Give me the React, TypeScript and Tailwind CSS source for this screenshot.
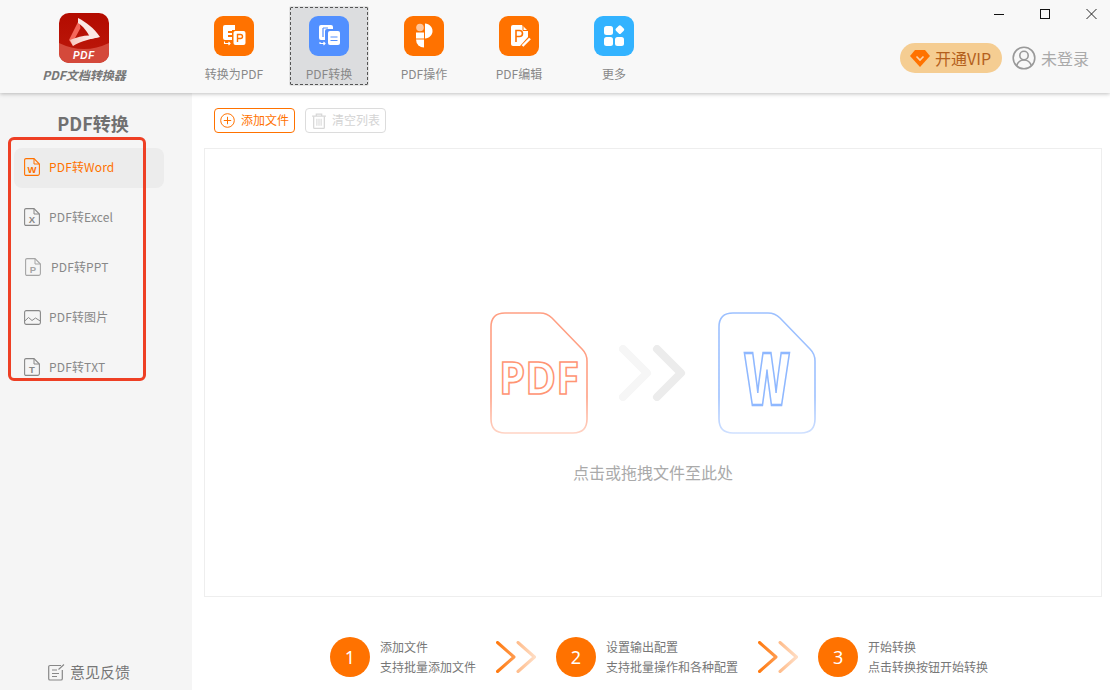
import React from "react";

const font = { fontFamily: '"Noto Sans CJK SC", "Noto Sans", sans-serif' };

function LogoIcon() {
  return (
    <svg width="50" height="50" viewBox="0 0 50 50">
      <defs>
        <linearGradient id="lg" x1="0" y1="0" x2="0" y2="1">
          <stop offset="0" stopColor="#b30b00" />
          <stop offset="1" stopColor="#bd1a0c" />
        </linearGradient>
        <linearGradient id="lgb" x1="0" y1="0" x2="1" y2="0">
          <stop offset="0" stopColor="#f6c6bc" />
          <stop offset="1" stopColor="#ffffff" />
        </linearGradient>
      </defs>
      <rect width="50" height="50" rx="10" fill="url(#lg)" />
      <path d="M0 30 Q25 42 50 30 V40 A10 10 0 0 1 40 50 H10 A10 10 0 0 1 0 40 Z" fill="#d4493b" />
      <path d="M20 7 L21.5 15 L15 27 L14 33 L10 27 Z" fill="#f4675a" />
      <path d="M11 27 L14 33 C22 28 31 26 40 24 L32 22.5 C26 22 18 24 11 27 Z" fill="url(#lgb)" />
      <path d="M19 5 C27 9 35 15 41 24 L32 26 C28 18 24 13 19 10 Z" fill="#fbe9e4" />
      <text x="25" y="46" textAnchor="middle" fontSize="10" fontWeight="700" fontStyle="italic" letterSpacing="0.6" fill="#fff" style={{ fontFamily: '"Liberation Sans", sans-serif' }}>PDF</text>
    </svg>
  );
}

function ConvertToIcon() {
  return (
    <svg width="40" height="40" viewBox="0 0 40 40">
      <rect width="40" height="40" rx="9" fill="#ff7200" />
      <path d="M11 9 H21 V14 H18 V15 H14 V17 H18 V19 H14 V21 H18 V24 H11 A2 2 0 0 1 9 22 V11 A2 2 0 0 1 11 9 Z" fill="#fff" />
      <rect x="19.5" y="15" width="12" height="14" rx="2" fill="#fff" />
      <path d="M23.5 26 V18.5 H26.5 A2 2 0 0 1 26.5 22.5 H23.5" fill="none" stroke="#ff7200" strokeWidth="1.4" />
      <path d="M10.5 25.5 V27.5 H16 M14.5 26 L16 27.5 L14.5 29" fill="none" stroke="#fff" strokeWidth="1.1" />
    </svg>
  );
}

function ConvertIcon() {
  return (
    <svg width="40" height="40" viewBox="0 0 40 40">
      <rect width="40" height="40" rx="9" fill="#5290ff" />
      <path d="M12 9 H22 A2 2 0 0 1 24 11 V13 H18 A2 2 0 0 0 16 15 V24 H12 A2 2 0 0 1 10 22 V11 A2 2 0 0 1 12 9 Z" fill="#fff" />
      <path d="M14 12 H19 M14 12 V21" fill="none" stroke="#5290ff" strokeWidth="1.2" />
      <rect x="19" y="15" width="12" height="14" rx="2" fill="#fff" />
      <path d="M21.5 21 H28.5 M21.5 24.5 H28.5" stroke="#5290ff" strokeWidth="1.2" />
      <path d="M11 26 V27.5 H16 M14.5 26 L16 27.5 L14.5 29" fill="none" stroke="#fff" strokeWidth="1.1" />
    </svg>
  );
}

function OperateIcon() {
  return (
    <svg width="40" height="40" viewBox="0 0 40 40">
      <rect width="40" height="40" rx="9" fill="#ff7200" />
      <circle cx="16" cy="11.5" r="3.8" fill="#ffc59a" />
      <path d="M21 7.5 C25.5 8 28.5 11 28.5 15 C28.5 19 25.5 22 21 22.5 Z" fill="#fff" />
      <rect x="12" y="16.5" width="8" height="6" fill="#fff" />
      <path d="M12 23.5 H20 V31.5 A8 8 0 0 1 12 23.5 Z" fill="#fff" />
    </svg>
  );
}

function EditIcon() {
  return (
    <svg width="40" height="40" viewBox="0 0 40 40">
      <rect width="40" height="40" rx="9" fill="#ff7200" />
      <path d="M14 9 H23 L29 15 V21 L21 30 H14 A2 2 0 0 1 12 28 V11 A2 2 0 0 1 14 9 Z" fill="#fff" />
      <path d="M17 26 V14.5 H20.5 A3 3 0 0 1 20.5 20.5 H17" fill="none" stroke="#ff7200" strokeWidth="1.6" />
      <path d="M23.5 30 L31 22.5" stroke="#fff" strokeWidth="2.4" />
      <path d="M24 9 V14.5 H29" fill="none" stroke="#ff7200" strokeWidth="1" />
    </svg>
  );
}

function MoreIcon() {
  return (
    <svg width="40" height="40" viewBox="0 0 40 40">
      <rect width="40" height="40" rx="9" fill="#33b3ff" />
      <rect x="10" y="10" width="9" height="9" rx="2.5" fill="#fff" />
      <rect x="10" y="21" width="9" height="9" rx="2.5" fill="#fff" />
      <rect x="21" y="21" width="9" height="9" rx="2.5" fill="#fff" />
      <rect x="22" y="10" width="7" height="7" rx="1.5" fill="#fff" transform="rotate(45 25.5 14)" />
    </svg>
  );
}

function FileIcon({ color, letter }: { color: string; letter: string }) {
  return (
    <svg width="16" height="18" viewBox="0 0 16 18" className="shrink-0">
      <path d="M2 .6 H10 L15.4 6 V15.5 A1.8 1.8 0 0 1 13.6 17.4 H2 A1.4 1.4 0 0 1 .6 16 V2 A1.4 1.4 0 0 1 2 .6 Z" fill="none" stroke={color} strokeWidth="1.1" />
      <path d="M10 .8 V6 H15.2" fill="none" stroke={color} strokeWidth="1" />
      <text x="8" y="15" textAnchor="middle" fontSize="9.5" fontWeight="700" fill={color} style={{ fontFamily: '"Liberation Sans", sans-serif' }}>{letter}</text>
    </svg>
  );
}

function ImageIcon() {
  return (
    <svg width="17" height="15" viewBox="0 0 17 15" className="-mr-[1px] shrink-0">
      <rect x=".6" y=".6" width="15.8" height="13.8" rx="1.6" fill="none" stroke="#888" strokeWidth="1.1" />
      <path d="M.8 11 L4.5 7.5 L8 10.5 L11.5 8 L16.2 11" fill="none" stroke="#888" strokeWidth="1" />
    </svg>
  );
}

function BigDoc({ stroke, fade, id, children }: { stroke: string; fade: string; id: string; children: React.ReactNode }) {
  return (
    <svg width="98" height="122" viewBox="0 0 98 122" className="shrink-0">
      <defs>
        <linearGradient id={id} x1="0" y1="0" x2="0" y2="1">
          <stop offset="0" stopColor={stroke} />
          <stop offset="0.7" stopColor={stroke} />
          <stop offset="1" stopColor={fade} />
        </linearGradient>
      </defs>
      <path d="M15 1 H50 Q57 1 62 6 L92 37 Q97 42 97 49 V107 Q97 121 83 121 H15 Q1 121 1 107 V15 Q1 1 15 1 Z" fill="#fff" stroke={`url(#${id})`} strokeWidth="1.6" />
      {children}
    </svg>
  );
}

function Chevrons() {
  return (
    <svg width="68" height="56" viewBox="0 0 68 56" className="shrink-0">
      <path d="M4 4 L28 28 L4 52" fill="none" stroke="#f6f6f6" strokeWidth="8" strokeLinecap="round" strokeLinejoin="round" />
      <path d="M38 4 L62 28 L38 52" fill="none" stroke="#ececec" strokeWidth="8" strokeLinecap="round" strokeLinejoin="round" />
    </svg>
  );
}

function StepArrows() {
  return (
    <svg width="40" height="32" viewBox="0 0 40 32" className="shrink-0">
      <defs>
        <linearGradient id="sa1" x1="0" y1="0" x2="1" y2="0">
          <stop offset="0" stopColor="#ff7a10" />
          <stop offset="1" stopColor="#ff9a4d" />
        </linearGradient>
        <linearGradient id="sa2" x1="0" y1="0" x2="1" y2="0">
          <stop offset="0" stopColor="#ffbd8c" />
          <stop offset="1" stopColor="#ffdcc2" />
        </linearGradient>
      </defs>
      <path d="M1.5 1.5 L18 16 L1.5 30.5" fill="none" stroke="url(#sa1)" strokeWidth="3" strokeLinecap="round" strokeLinejoin="round" />
      <path d="M22 1.5 L38.5 16 L22 30.5" fill="none" stroke="url(#sa2)" strokeWidth="3" strokeLinecap="round" strokeLinejoin="round" />
    </svg>
  );
}

function Step({ n, title, desc }: { n: string; title: string; desc: string }) {
  return (
    <div className="flex items-center gap-[10px]">
      <div className="flex h-10 w-10 items-center justify-center rounded-full bg-[#ff7200] text-[18px] text-white" style={{ fontFamily: '"Noto Sans", sans-serif' }}>{n}</div>
      <div className="mb-[2px] flex flex-col gap-[3px] text-[12px] leading-[17px] text-[#777]">
        <span>{title}</span>
        <span>{desc}</span>
      </div>
    </div>
  );
}

const navItems = [
  { label: "转换为PDF", icon: <ConvertToIcon /> },
  { label: "PDF转换", icon: <ConvertIcon />, active: true },
  { label: "PDF操作", icon: <OperateIcon /> },
  { label: "PDF编辑", icon: <EditIcon /> },
  { label: "更多", icon: <MoreIcon /> },
];

const sideItems = [
  { label: "PDF转Word", icon: <FileIcon color="#ff7200" letter="W" />, active: true },
  { label: "PDF转Excel", icon: <FileIcon color="#888" letter="X" /> },
  { label: "PDF转PPT", icon: <span className="ml-[1px] mr-[1px] flex"><FileIcon color="#a5a5a5" letter="P" /></span> },
  { label: "PDF转图片", icon: <ImageIcon /> },
  { label: "PDF转TXT", icon: <FileIcon color="#888" letter="T" /> },
];

export default function App() {
  return (
    <div className="flex h-[690px] w-[1110px] flex-col overflow-hidden bg-white" style={font}>
      <header className="relative z-10 flex h-[93px] shrink-0 bg-[#f8f8f8] shadow-[0_1px_4px_rgba(0,0,0,0.25)]">
        <div className="flex w-[168px] shrink-0 flex-col items-center pt-[13px]">
          <LogoIcon />
          <span className="mt-[3px] text-[12px] font-bold italic leading-[18px] text-[#777]">PDF文档转换器</span>
        </div>
        <nav className="ml-[27px] flex gap-[17px] pt-[7px]">
          {navItems.map((it) => (
            <div
              key={it.label}
              className={`flex h-[78px] w-[78px] flex-col items-center ${it.active ? "rounded-[1px] border border-dashed border-[#555] bg-[#dcdddf] pt-[8px] outline outline-1 outline-[#e4e4e4]" : "pt-[9px]"}`}
            >
              {it.icon}
              <span className="mt-[9px] text-[12px] leading-[18px] text-[#888]">{it.label}</span>
            </div>
          ))}
        </nav>
        <div className="ml-auto flex w-[210px] flex-col">
          <div className="flex h-[28px] items-start justify-end gap-[36px] pr-[13px] pt-[9px]">
            <svg width="10" height="10" viewBox="0 0 10 10"><path d="M0 5.5 H10" stroke="#111" strokeWidth="1" /></svg>
            <svg width="10" height="10" viewBox="0 0 10 10"><rect x=".5" y=".5" width="9" height="9" fill="none" stroke="#111" strokeWidth="1" /></svg>
            <svg width="11" height="10" viewBox="0 0 11 10"><path d="M.5 0 L10.5 10 M10.5 0 L.5 10" stroke="#111" strokeWidth="0.9" /></svg>
          </div>
          <div className="mt-[15px] flex items-center">
            <div className="flex h-[30px] w-[102px] items-center rounded-full bg-[#f5cd92] pl-[10px]">
              <svg width="20" height="18" viewBox="0 0 20 18" className="shrink-0">
                <path d="M5 1 H15 L20 7 L10 18 L0 7 Z" fill="#ff7200" />
                <path d="M6.5 7.5 L10 11 L13.5 7.5" fill="none" stroke="#fbd3a8" strokeWidth="1.6" />
              </svg>
              <span className="ml-[5px] text-[16px] leading-[24px] text-[#b4601c]">开通VIP</span>
            </div>
            <svg width="24" height="24" viewBox="0 0 24 24" className="ml-[10px] shrink-0">
              <circle cx="12" cy="12" r="10.8" fill="none" stroke="#999" strokeWidth="1.6" />
              <circle cx="12" cy="9.5" r="4.2" fill="none" stroke="#999" strokeWidth="1.6" />
              <path d="M4.5 20 C6 15.5 9 14 12 14 C15 14 18 15.5 19.5 20" fill="none" stroke="#999" strokeWidth="1.6" />
            </svg>
            <span className="ml-[5px] text-[16px] leading-[24px] text-[#aaa]">未登录</span>
          </div>
        </div>
      </header>

      <div className="flex min-h-0 flex-1">
        <aside className="relative flex w-[192px] shrink-0 flex-col bg-[#f5f5f5]">
          <h2 className="mt-[17px] w-[186px] text-center text-[18px] font-bold leading-[26px] text-[#707070]">PDF转换</h2>
          <ul className="ml-[14px] mt-[12px] flex w-[150px] flex-col gap-[10px]">
            {sideItems.map((it) => (
              <li
                key={it.label}
                className={`flex h-10 items-center gap-[9px] rounded-lg pb-[2px] pl-[10px] text-[12px] tracking-[0.15px] ${it.active ? "bg-[#ececec] text-[#ff7200]" : "text-[#888]"}`}
              >
                {it.icon}
                <span>{it.label}</span>
              </li>
            ))}
          </ul>
          <div className="absolute left-[8px] top-[44px] h-[244px] w-[138px] rounded-[6px] border-[3px] border-[#ee3f24]" />
          <div className="mt-auto flex items-center justify-center gap-[5px] pb-[8px] pr-[14px]">
            <svg width="17" height="17" viewBox="0 0 17 17">
              <path d="M13 1.5 H2 A1.3 1.3 0 0 0 .7 2.8 V14.7 A1.3 1.3 0 0 0 2 16 H13 A1.3 1.3 0 0 0 14.3 14.7 V6" fill="none" stroke="#888" strokeWidth="1.2" />
              <path d="M4 6 H9 M4 9.5 H11 M4 12.5 H9 M10.5 5.5 L16 .5" stroke="#888" strokeWidth="1.1" fill="none" />
            </svg>
            <span className="text-[15px] leading-[20px] text-[#777]">意见反馈</span>
          </div>
        </aside>

        <main className="flex min-w-0 flex-1 flex-col">
          <div className="ml-[22px] mt-[15px] flex gap-[10px]">
            <div className="flex h-[25px] w-[81px] items-center gap-[6px] rounded-[4px] border border-[#ff7200] pl-[5px] text-[12px] text-[#ff7200]">
              <svg width="15" height="15" viewBox="0 0 15 15"><circle cx="7.5" cy="7.5" r="6.8" fill="none" stroke="#ff7200" strokeWidth="1" /><path d="M3.8 7.5 H11.2 M7.5 3.8 V11.2" stroke="#ff7200" strokeWidth="1" /></svg>
              <span className="mb-[2px]">添加文件</span>
            </div>
            <div className="flex h-[25px] w-[81px] items-center gap-[6px] rounded-[4px] border border-[#dcdcdc] pl-[6px] text-[12px] text-[#d4d4d4]">
              <svg width="14" height="16" viewBox="0 0 13 15"><path d="M0 3 H13 M4 3 V1 H9 V3" fill="none" stroke="#d8d8d8" strokeWidth="1.2" /><path d="M1.5 3 V13.5 A1 1 0 0 0 2.5 14.5 H10.5 A1 1 0 0 0 11.5 13.5 V3" fill="none" stroke="#d8d8d8" strokeWidth="1.2" /><path d="M4.5 5.5 V12 M6.5 5.5 V12 M8.5 5.5 V12" stroke="#d8d8d8" strokeWidth="1" /></svg>
              <span className="mb-[2px]">清空列表</span>
            </div>
          </div>

          <section className="ml-[12px] mr-[8px] mt-[15px] flex h-[449px] shrink-0 flex-col items-center border border-[#eeeeee] pt-[163px]">
            <div className="flex items-center gap-[31px]">
              <BigDoc stroke="#ff9f83" fade="#ffd3c4" id="dpdf">
                <g transform="translate(49 82) scale(0.93 1)">
                  <text x="0" y="0" textAnchor="middle" fontSize="45" fontWeight="700" fill="#fff" stroke="#ff9573" strokeWidth="1.6" style={{ fontFamily: '"Open Sans", sans-serif' }}>PDF</text>
                </g>
              </BigDoc>
              <Chevrons />
              <BigDoc stroke="#9cc0ff" fade="#cfe0ff" id="dw">
                <g transform="translate(49 93) scale(0.62 1)">
                  <text x="0" y="0" textAnchor="middle" fontSize="72" fontWeight="800" fill="#fff" stroke="#8fb8ff" strokeWidth="2.4" style={{ fontFamily: '"Open Sans", sans-serif' }}>W</text>
                </g>
              </BigDoc>
            </div>
            <p className="mt-[26px] text-[16px] leading-[24px] text-[#aaa]">点击或拖拽文件至此处</p>
          </section>

          <div className="ml-[138px] mt-[40px] flex items-center gap-[20px]">
            <Step n="1" title="添加文件" desc="支持批量添加文件" />
            <StepArrows />
            <Step n="2" title="设置输出配置" desc="支持批量操作和各种配置" />
            <StepArrows />
            <Step n="3" title="开始转换" desc="点击转换按钮开始转换" />
          </div>
        </main>
      </div>
    </div>
  );
}
